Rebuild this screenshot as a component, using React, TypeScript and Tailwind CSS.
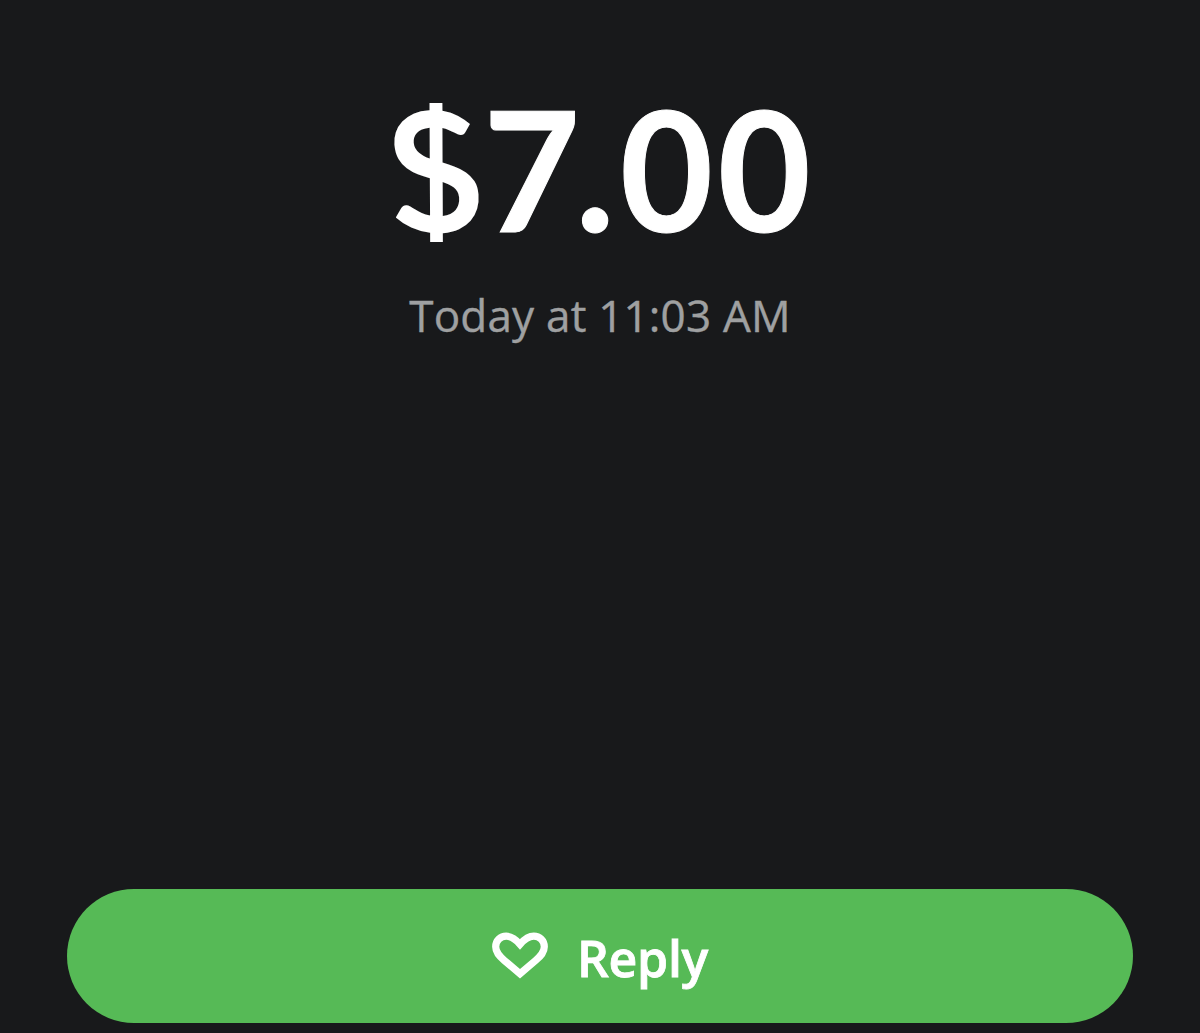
interface PaymentProps {
    dollars: string;
    cents: string;
    date: string;
}

function HeartIcon() {
    return (
        <svg width="56" height="48" viewBox="0 0 56 48" fill="none" className="block flex-none -mt-[1px]">
            <path
                d="M28 41.8 L12.3 28.4 C7 23.8 3.7 20.2 3.7 14.8 C3.7 8.6 8.4 4.2 14.2 4.2 C19.6 4.2 23.5 7.2 28 12.3 C32.5 7.2 36.4 4.2 41.8 4.2 C47.6 4.2 52.3 8.6 52.3 14.8 C52.3 20.2 49 23.8 43.7 28.4 Z"
                stroke="currentColor"
                strokeWidth="7.2"
            />
        </svg>
    );
}

function PaymentSummary({ dollars, cents, date }: PaymentProps) {
    return (
        <div className="flex flex-col items-center whitespace-nowrap">
            <h1 className="flex text-[167px] leading-[200px] font-bold text-white [-webkit-text-stroke:1px_white]">
                {/* Straighten the slanted bar and trim its ends */}
                <span className="block skew-x-[5deg] [clip-path:inset(35px_0_26px_0)] [-webkit-text-stroke:0px]">$</span>
                <span className="block tracking-[-5px]">{dollars}</span>
                <span className="block pr-[5px]">.</span>
                <span className="block origin-left scale-x-96 tracking-[5px] -mr-[10px]">{cents}</span>
            </h1>
            <p className="mt-[19px] text-[44px] leading-[56px] tracking-[0.2px] font-['Open_Sans'] text-[#9fa0a1] [-webkit-text-stroke:0.4px_#9fa0a1]">
                {date}
            </p>
        </div>
    );
}

export default function App() {
    return (
        <div className="flex flex-col justify-between h-screen bg-[#18191b] px-[67px] pt-[68px] pb-[10px] font-['Lato',sans-serif] overflow-hidden">
            <PaymentSummary dollars="7" cents="00" date="Today at 11:03 AM" />

            <button className="flex flex-none items-center justify-center gap-[29px] w-full h-[134px] rounded-full bg-[#56ba56] text-white">
                <HeartIcon />
                <span className="pt-[3px] text-[50px] leading-[60px] tracking-[-0.3px] font-['Open_Sans'] font-semibold [-webkit-text-stroke:0.8px_white]">
                    Reply
                </span>
            </button>
        </div>
    );
}
